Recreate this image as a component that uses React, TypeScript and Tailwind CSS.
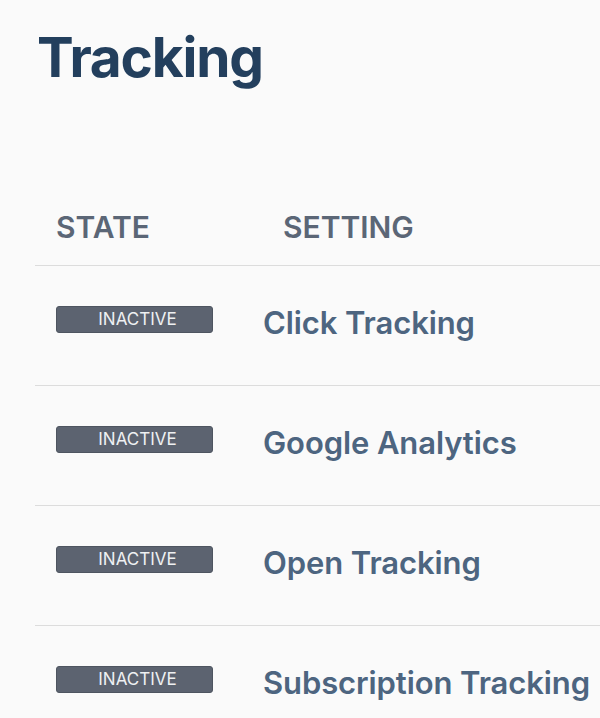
import React from "react";

const rows = ["Click Tracking", "Google Analytics", "Open Tracking", "Subscription Tracking"];

export default function App() {
  return (
    <div className="w-[600px] h-[718px] overflow-hidden bg-[#fafafa] font-['Inter',sans-serif]">
      <div className="pl-[35px]">
        <h1 className="pt-[30px] pl-[2px] text-[55px] leading-none font-bold text-[#233f5d] tracking-[-1.2px]">Tracking</h1>
        <div className="mt-[127px] flex items-end h-[54px] border-b border-[#dcdcdc]">
          <div className="pl-[21px] w-[248px] shrink-0 text-[30px] leading-none font-semibold text-[#5b6676] pb-[23px]">STATE</div>
          <div className="text-[30px] leading-none font-semibold text-[#5b6676] pb-[23px]">SETTING</div>
        </div>
        {rows.map((r) => (
          <div key={r} className="h-[120px] border-b border-[#dcdcdc] flex items-start pt-[40px]">
            <div className="ml-[21px] w-[157px] shrink-0 h-[27px] rounded-[3px] bg-[#5c6370] border border-[#4e5560] flex items-center justify-center text-[17px] leading-none text-[#eef0f2] pl-[6px]">
              INACTIVE
            </div>
            <div className="ml-[50px] mt-[1px] text-[31px] leading-none font-semibold text-[#4d6580] whitespace-nowrap tracking-[-0.1px]">{r}</div>
          </div>
        ))}
      </div>
    </div>
  );
}
